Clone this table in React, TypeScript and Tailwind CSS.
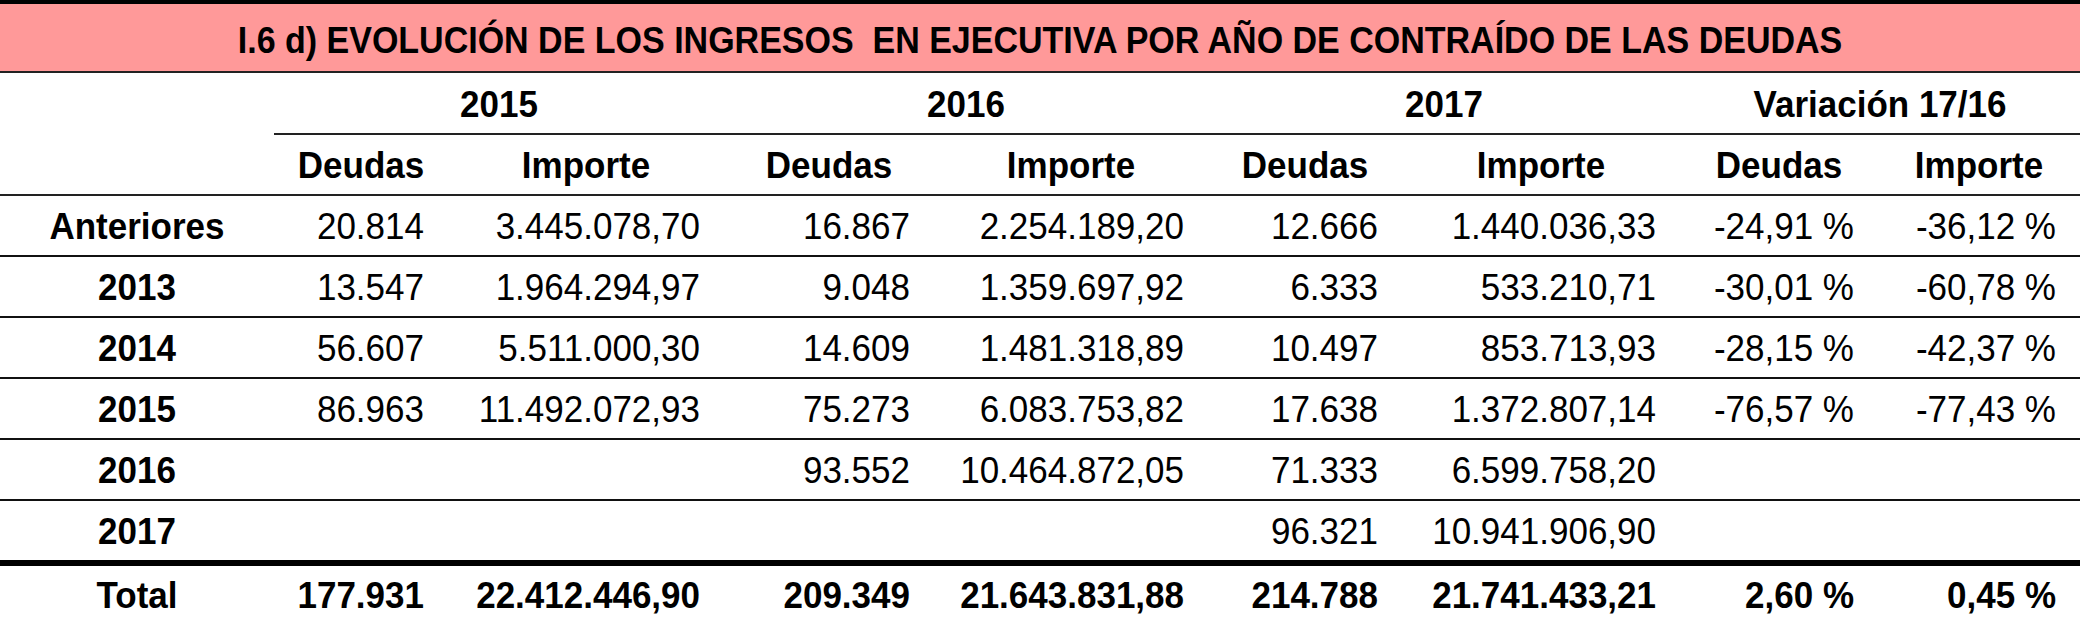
import React from "react";

type Row = {
  label: string;
  values: string[];
};

const rows: Row[] = [
  {
    label: "Anteriores",
    values: ["20.814", "3.445.078,70", "16.867", "2.254.189,20", "12.666", "1.440.036,33", "-24,91 %", "-36,12 %"],
  },
  {
    label: "2013",
    values: ["13.547", "1.964.294,97", "9.048", "1.359.697,92", "6.333", "533.210,71", "-30,01 %", "-60,78 %"],
  },
  {
    label: "2014",
    values: ["56.607", "5.511.000,30", "14.609", "1.481.318,89", "10.497", "853.713,93", "-28,15 %", "-42,37 %"],
  },
  {
    label: "2015",
    values: ["86.963", "11.492.072,93", "75.273", "6.083.753,82", "17.638", "1.372.807,14", "-76,57 %", "-77,43 %"],
  },
  {
    label: "2016",
    values: ["", "", "93.552", "10.464.872,05", "71.333", "6.599.758,20", "", ""],
  },
  {
    label: "2017",
    values: ["", "", "", "", "96.321", "10.941.906,90", "", ""],
  },
];

const totals = ["177.931", "22.412.446,90", "209.349", "21.643.831,88", "214.788", "21.741.433,21", "2,60 %", "0,45 %"];

const cols = "grid grid-cols-[274px_174px_276px_210px_274px_194px_278px_198px_202px]";

// the sheet's font is a touch taller than Arial at the same width
const T: React.FC<{ children: React.ReactNode }> = ({ children }) => (
  <span className="inline-block scale-y-[1.07] whitespace-pre">{children}</span>
);

export default function App() {
  return (
    <div
      className="w-[2080px] h-[622px] bg-white text-black text-[35px] leading-none overflow-hidden"
      style={{ fontFamily: '"Liberation Sans", Arial, sans-serif' }}
    >
      {/* title */}
      <div className="border-t-4 border-b-2 border-t-black border-b-[#222] bg-[#ff9999] h-[73px] flex items-center justify-center pt-1">
        <span className="text-[34px] font-bold">
          <T>I.6 d) EVOLUCIÓN DE LOS INGRESOS  EN EJECUTIVA POR AÑO DE CONTRAÍDO DE LAS DEUDAS</T>
        </span>
      </div>

      {/* year header */}
      <div className={`${cols} h-[62px] font-bold`}>
        <div />
        {["2015", "2016", "2017", "Variación 17/16"].map((y) => (
          <div key={y} className="col-span-2 border-b-2 border-[#222] flex items-center justify-center">
            <T>{y}</T>
          </div>
        ))}
      </div>

      {/* sub header */}
      <div className={`${cols} h-[61px] font-bold border-b-2 border-[#222]`}>
        <div />
        {[0, 1, 2, 3].map((i) => (
          <React.Fragment key={i}>
            <div className="flex items-center justify-center">
              <T>Deudas</T>
            </div>
            <div className="flex items-center justify-center">
              <T>Importe</T>
            </div>
          </React.Fragment>
        ))}
      </div>

      {/* data rows */}
      {rows.map((r, i) => (
        <div
          key={r.label}
          className={`${cols} ${
            i === rows.length - 1 ? "h-[65px] border-b-[6px] border-black" : "h-[61px] border-b-2 border-[#111]"
          }`}
        >
          <div className="flex items-center justify-center font-bold">
            <T>{r.label}</T>
          </div>
          {r.values.map((v, j) => (
            <div key={j} className="flex items-center justify-end pr-[24px]">
              <T>{v}</T>
            </div>
          ))}
        </div>
      ))}

      {/* total */}
      <div className={`${cols} h-[56px] font-bold`}>
        <div className="flex items-center justify-center">
          <T>Total</T>
        </div>
        {totals.map((v, j) => (
          <div key={j} className="flex items-center justify-end pr-[24px]">
            <T>{v}</T>
          </div>
        ))}
      </div>
    </div>
  );
}
